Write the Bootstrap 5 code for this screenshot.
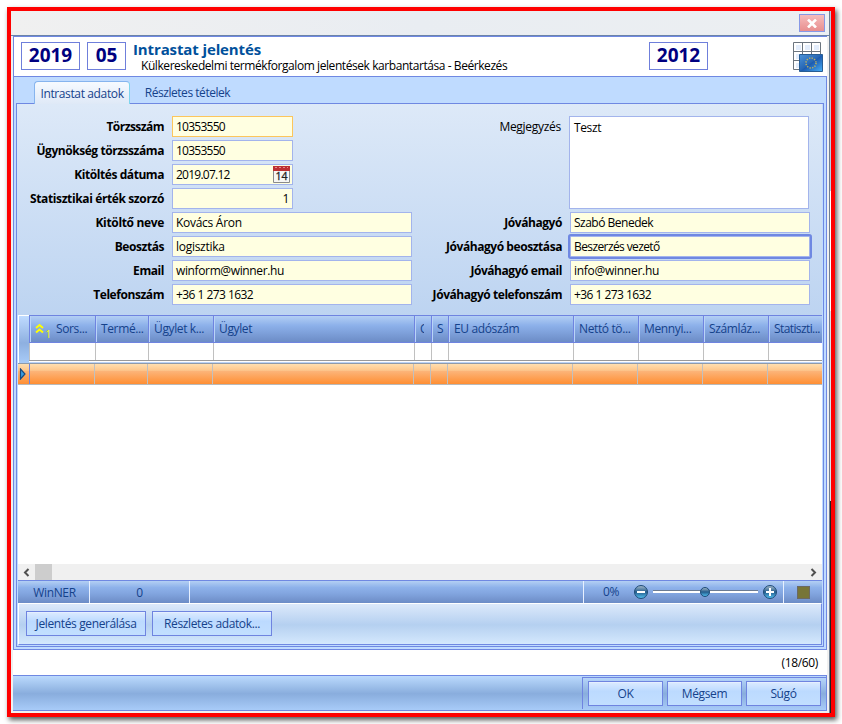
<!DOCTYPE html>
<html lang="hu">
<head>
<meta charset="utf-8">
<title>Intrastat jelentés</title>
<link href="https://cdn.jsdelivr.net/npm/bootstrap@5.3.0/dist/css/bootstrap.min.css" rel="stylesheet">
<style>
*{box-sizing:border-box}
body{margin:0;width:842px;height:724px;padding:7px;overflow:hidden;background:#fff;font:12px/16px "Open Sans","Noto Sans",sans-serif;letter-spacing:-.37px;color:#000;white-space:nowrap}
svg{display:block;flex:none}
.frame{width:828px;height:710px;border:4px solid #f00;box-shadow:2px 3px 5px rgba(0,0,0,.65);background:linear-gradient(#b5cbe3 0 180px,#fff 180px 300px,#d8dfe8 300px 490px,#222 490px)}
.win{width:819px;height:702px;background:#f0f0f0;border-right:1px solid #6d7f94}
.titlebar{height:25px;border-bottom:1px solid #6b83a8;background:linear-gradient(90deg,#f0f0f0,#e9edf2 50%,#eceff2);padding:3px 4px 0 0}
.closebtn{width:26px;height:18px;border:1px solid #8798e6;background:linear-gradient(#f6bcbc,#e88f8f)}
.inner{margin-left:2px;width:814px;height:675px;background:#fff}
.hd{height:40px;border-top:1px solid #6f88e2;border-left:1px solid #6f88e2;padding:5px 3px 0 7px}
.yr{height:28px;border:1px solid #6f7fdb;color:#000080;font-weight:700;font-size:19px;line-height:25px;text-align:center;letter-spacing:0}
.ttl{font-size:15px;line-height:15px;font-weight:700;color:#00509b;letter-spacing:-.12px}
.sub{padding-left:8px;line-height:18px;letter-spacing:-.43px}
.area{height:574px;border:1px solid #6f88e2;background:#bfdbff;padding:4px 2px 3px 2px}
.tabs{height:22px;padding-left:18px}
.tab1{width:96px;height:23px;border:1px solid #86b4ee;border-bottom:0;border-right-color:#7fd4ee;border-radius:4px 4px 0 0;background:linear-gradient(#f6faff,#dfe9f7);z-index:2}
.tab1,.tab2{color:#15428b;line-height:24px;text-align:center}
.tab2{width:115px;letter-spacing:-.46px}
.panel{height:544px;border:1px solid #6f88e2;background:#bfdbff;padding:0 1px 0 0;position:relative}
.form-area{height:211px;background:linear-gradient(#dde9f8,#bdd4f1);padding:12px 12px 0 0}
.r{height:24px}
.lb{font-weight:700;text-align:right;line-height:21px;letter-spacing:-.44px}
.l1{width:147px;margin-right:8px}.l2{width:157px;margin-right:8px}
.in{height:21px;border:1px solid #a3b4ec;background:#ffffe1;padding:0 4px 0 3px;line-height:19px}
.num{letter-spacing:-.75px}
.tel{letter-spacing:-.55px}
.w1{width:121px}.w2{width:240px}
.memo{width:240px;height:93px;border:1px solid #a3b4ec;background:#fff;padding:2px 4px;line-height:18px}
.foc{box-shadow:0 0 0 2px #6f88e2;border-radius:1px;letter-spacing:-.6px}
.gr{display:grid;grid-template-columns:11px 66px 53px 65px 201px 17px 17px 125px 65px 65px 65px 54px;width:804px;overflow:hidden}
.gh{height:28px}
.gh>div{border:solid #6f84e0;border-width:1px 0 1px 1px;background:linear-gradient(#b3cff4,#8db1ea 36%,#83a6e0 55%,#6c8cc6);box-shadow:inset 1px 0 #b9d3f8;color:#15428b;line-height:26px;padding-left:5px;overflow:hidden}
.gh>div:last-child{letter-spacing:-.6px}
.gh>div:first-child{border:1px solid #fff;border-right:0;border-bottom:0;background:linear-gradient(#bfdbff,#8eb0e0);box-shadow:none}
.half{display:block;width:4px;overflow:hidden}
.gf{height:20px;background:linear-gradient(#fff 17px,#999 17px 18px,#fff 18px 19px,#b9d3f8 19px)}
.gf>div{height:17px;border-left:1px solid #c0c0c0}
.gf>div:first-child{height:21px;border-left:1px solid #fff;background:linear-gradient(#8eb0e0,#a9ccf8)}
.go{height:22px;border-top:1px solid #8f9aa8;border-bottom:1px solid #b9b9b9;background:linear-gradient(#ffdfb0,#fdc68c 32%,#fcb479 36%,#ff8f33);grid-template-columns:11px 65px 53px 65px 201px 17px 17px 125px 65px 65px 65px 55px}
.go>div{border-left:1px solid #c0c0c0}
.go>div:first-child{border:0;padding-top:4px}
.go>div:nth-child(2){border-color:#6f84e0}
.blank{height:179px;background:#fff}
.sb{height:16px;background:#f0f0f0;padding:0 5px 0 5px}
.thumb{width:17px;height:16px;background:#cdcdcd}
.st{height:23px;border-top:1px solid #6f88e2;background:linear-gradient(#b3cff4,#8db1ea 30%,#83a6e0 55%,#6c8cc6);color:#15428b;line-height:24px;text-align:center}
.st>div{height:22px;border-right:1px solid #e7f0ff}
.tb{height:42px;border:1px solid #fff;border-bottom-color:#6f88e2;border-right-color:#6f88e2;background:linear-gradient(#dce9fb,#b5d0f0 52%,#d4e8fd);padding:7px 0 0 7px;gap:6px}
.bt{height:25px;border:1px solid #6f84e0;background:linear-gradient(#dcebff,#bcdaff 40%,#c2dfff);box-shadow:inset 0 1px #e5efff;color:#15428b;text-align:center;line-height:24px}
.cnt{height:25px;text-align:right;padding-right:9px;line-height:26px;letter-spacing:-.35px}
.ft{height:36px;border-top:1px solid #6f88e2;border-bottom:1px solid #6f88e2;border-right:1px solid #6f88e2;background:linear-gradient(#bbdafd,#89addd 52%,#a8cbf8)}
.fb{width:244px;height:32px;margin-top:1px;border-left:1px solid #6f84e0;border-top:1px solid #6f84e0;padding:3px 0 0 5px;gap:4px}
.fb .bt{width:75px}
</style>
<script src="https://cdn.jsdelivr.net/npm/bootstrap@5.3.0/dist/js/bootstrap.bundle.min.js"></script>
</head>
<body>
<div class="frame"><div class="win">
 <div class="titlebar d-flex justify-content-end"><div class="closebtn d-flex align-items-center justify-content-center"><svg width="10" height="9"><path d="M1 .5l8 8M9 .5l-8 8" stroke="#fff" stroke-width="2.6"/></svg></div></div>
 <div class="inner">
  <header class="hd d-flex">
   <div class="yr" style="width:59px">2019</div><div class="yr" style="width:39px;margin-left:7px">05</div>
   <div style="width:523px;padding-left:7px"><div class="ttl">Intrastat jelentés</div><div class="sub">Külkereskedelmi termékforgalom jelentések karbantartása - Beérkezés</div></div>
   <div class="yr" style="width:59px">2012</div>
   <svg class="ms-auto" width="31" height="31" viewBox="0 0 31 31"><defs><linearGradient id="eu" x2="1" y2="1"><stop stop-color="#4d94d8"/><stop offset=".48" stop-color="#2767b5"/><stop offset=".52" stop-color="#1c5bb0"/><stop offset="1" stop-color="#49b0f8"/></linearGradient></defs><path d="M.5.5h27v27H.5z" fill="#fff" stroke="#6c757f"/><path d="M9.500 0v28M18.500 0v28M0 9.500h28M0 18.500h28" stroke="#6c757f"/><path d="M3 3h5v5H3zM12 3h5v5h-5zM21 3h5v5h-5zM3 12h5v5H3zM3 21h4v5H3z" fill="#e3edfc"/><path d="M6.500 12.500h23v17h-23z" fill="url(#eu)" stroke="#285d94"/><circle cx="18" cy="21" r="5" fill="none" stroke="#b9ae62" stroke-width="1.500" stroke-dasharray="1.300 1.320"/></svg>
  </header>
  <main class="area">
   <div class="tabs d-flex"><div class="tab1">Intrastat adatok</div><div class="tab2">Részletes tételek</div></div>
   <div class="panel">
    <div class="form-area d-flex">
     <div>
      <div class="r d-flex"><div class="lb l1" style="letter-spacing:-.55px">Törzsszám</div><div class="in w1 num" style="border-color:#fcc65c">10353550</div></div>
      <div class="r d-flex"><div class="lb l1">Ügynökség törzsszáma</div><div class="in w1 num">10353550</div></div>
      <div class="r d-flex"><div class="lb l1">Kitöltés dátuma</div><div class="in w1 d-flex justify-content-between" style="padding-right:2px"><span class="num">2019.07.12</span><svg width="17" height="17" style="margin-top:1px"><path d="M.5.5h16v16H.5z" fill="#f6f6f4" stroke="#8a8a8a"/><path d="M0 0h17v5H0z" fill="#bd2f32"/><path d="M2 1.500h2m2 0h2m2 0h2m2 0h1" stroke="#e08b8b"/><text x="8.500" y="14" font-size="10.500" text-anchor="middle" fill="#222" stroke="#222" stroke-width=".3" letter-spacing="0">14</text></svg></div></div>
      <div class="r d-flex"><div class="lb l1" style="letter-spacing:-.38px">Statisztikai érték szorzó</div><div class="in w1 text-end" style="padding-right:3px">1</div></div>
      <div class="r d-flex"><div class="lb l1" style="letter-spacing:-.34px">Kitöltő neve</div><div class="in w2" style="letter-spacing:-.28px">Kovács Áron</div></div>
      <div class="r d-flex"><div class="lb l1">Beosztás</div><div class="in w2" style="letter-spacing:-.28px">logisztika</div></div>
      <div class="r d-flex"><div class="lb l1">Email</div><div class="in w2">winform@winner.hu</div></div>
      <div class="r d-flex"><div class="lb l1">Telefonszám</div><div class="in w2 tel">+36 1 273 1632</div></div>
     </div>
     <div style="margin-left:-7px">
      <div class="d-flex" style="height:96px"><div class="lb l2 fw-normal" style="width:156px;letter-spacing:-.28px">Megjegyzés</div><div class="memo">Teszt</div></div>
      <div class="r d-flex"><div class="lb l2">Jóváhagyó</div><div class="in w2" style="letter-spacing:-.5px">Szabó Benedek</div></div>
      <div class="r d-flex"><div class="lb l2">Jóváhagyó beosztása</div><div class="in w2 foc">Beszerzés vezető</div></div>
      <div class="r d-flex"><div class="lb l2">Jóváhagyó email</div><div class="in w2" style="letter-spacing:-.28px">info@winner.hu</div></div>
      <div class="r d-flex"><div class="lb l2">Jóváhagyó telefonszám</div><div class="in w2 tel">+36 1 273 1632</div></div>
     </div>
    </div>
    <div style="padding-left:1px">
     <div class="gr gh"><div></div><div class="d-flex"><svg width="17" height="18" style="margin-top:7px;margin-right:4px"><path d="M1 5l3.500-3L8 5M1 9.500l3.500-3L8 9.500" fill="none" stroke="#ff0" stroke-width="2"/><text x="10.500" y="14.500" font-size="10" fill="#ff0">1</text></svg>Sors...</div><div>Termé...</div><div>Ügylet k...</div><div>Ügylet</div><div><span class="half">C</span></div><div>S</div><div>EU adószám</div><div>Nettó tö...</div><div>Mennyi...</div><div>Számláz...</div><div>Statiszti...</div></div>
     <div class="gr gf"><div></div><div></div><div></div><div></div><div></div><div></div><div></div><div></div><div></div><div></div><div></div><div></div></div>
     <div class="gr go"><div><svg width="9" height="12"><path d="M2.500 1v10L7 6z" fill="#3b9de0" stroke="#174a80" stroke-width="1.200"/></svg></div><div></div><div></div><div></div><div></div><div></div><div></div><div></div><div></div><div></div><div></div><div></div></div>
     <div class="blank"></div>
     <div class="sb d-flex align-items-center"><svg width="7" height="9"><path d="M5.500 1L2 4.500 5.500 8" fill="none" stroke="#505050" stroke-width="2"/></svg><div class="thumb" style="margin-left:5px"></div><svg class="ms-auto" width="7" height="9"><path d="M1.500 1L5 4.500 1.500 8" fill="none" stroke="#505050" stroke-width="2"/></svg></div>
     <div class="st d-flex"><div style="width:72px;padding-left:2px">WinNER</div><div style="width:100px">0</div><div style="width:394px"></div>
      <div class="d-flex align-items-center" style="width:200px;padding-left:19px"><span style="width:18px;line-height:20px">0%</span>
      <svg width="151" height="18" style="margin-left:14px"><defs><linearGradient id="bb" x2="0" y2="1"><stop stop-color="#a9bccb"/><stop offset=".5" stop-color="#245d8d"/><stop offset="1" stop-color="#55c4f5"/></linearGradient></defs><path d="M20 7.500h105" stroke="#6b7b92"/><path d="M20 9h105" stroke="#fff" stroke-width="2"/><g fill="url(#bb)" stroke="#1f4c78"><circle cx="8" cy="9" r="6.500"/><circle cx="72" cy="9" r="4.500"/><circle cx="137" cy="9" r="6.500"/></g><path d="M4 9h8M133 9h8M137 5v8" stroke="#fff" stroke-width="2"/></svg></div>
      <div class="border-0 flex-fill d-flex align-items-center justify-content-center"><span style="width:13px;height:13px;background:#777538;border:1px solid #6b6964"></span></div></div>
     <div class="tb d-flex"><div class="bt" style="width:120px">Jelentés generálása</div><div class="bt" style="width:120px">Részletes adatok...</div></div>
    </div>
   </div>
  </main>
  <div class="cnt">(18/60)</div>
  <footer class="ft d-flex justify-content-end"><div class="fb d-flex"><div class="bt">OK</div><div class="bt">Mégsem</div><div class="bt">Súgó</div></div></footer>
 </div>
</div></div>
</body>
</html>
